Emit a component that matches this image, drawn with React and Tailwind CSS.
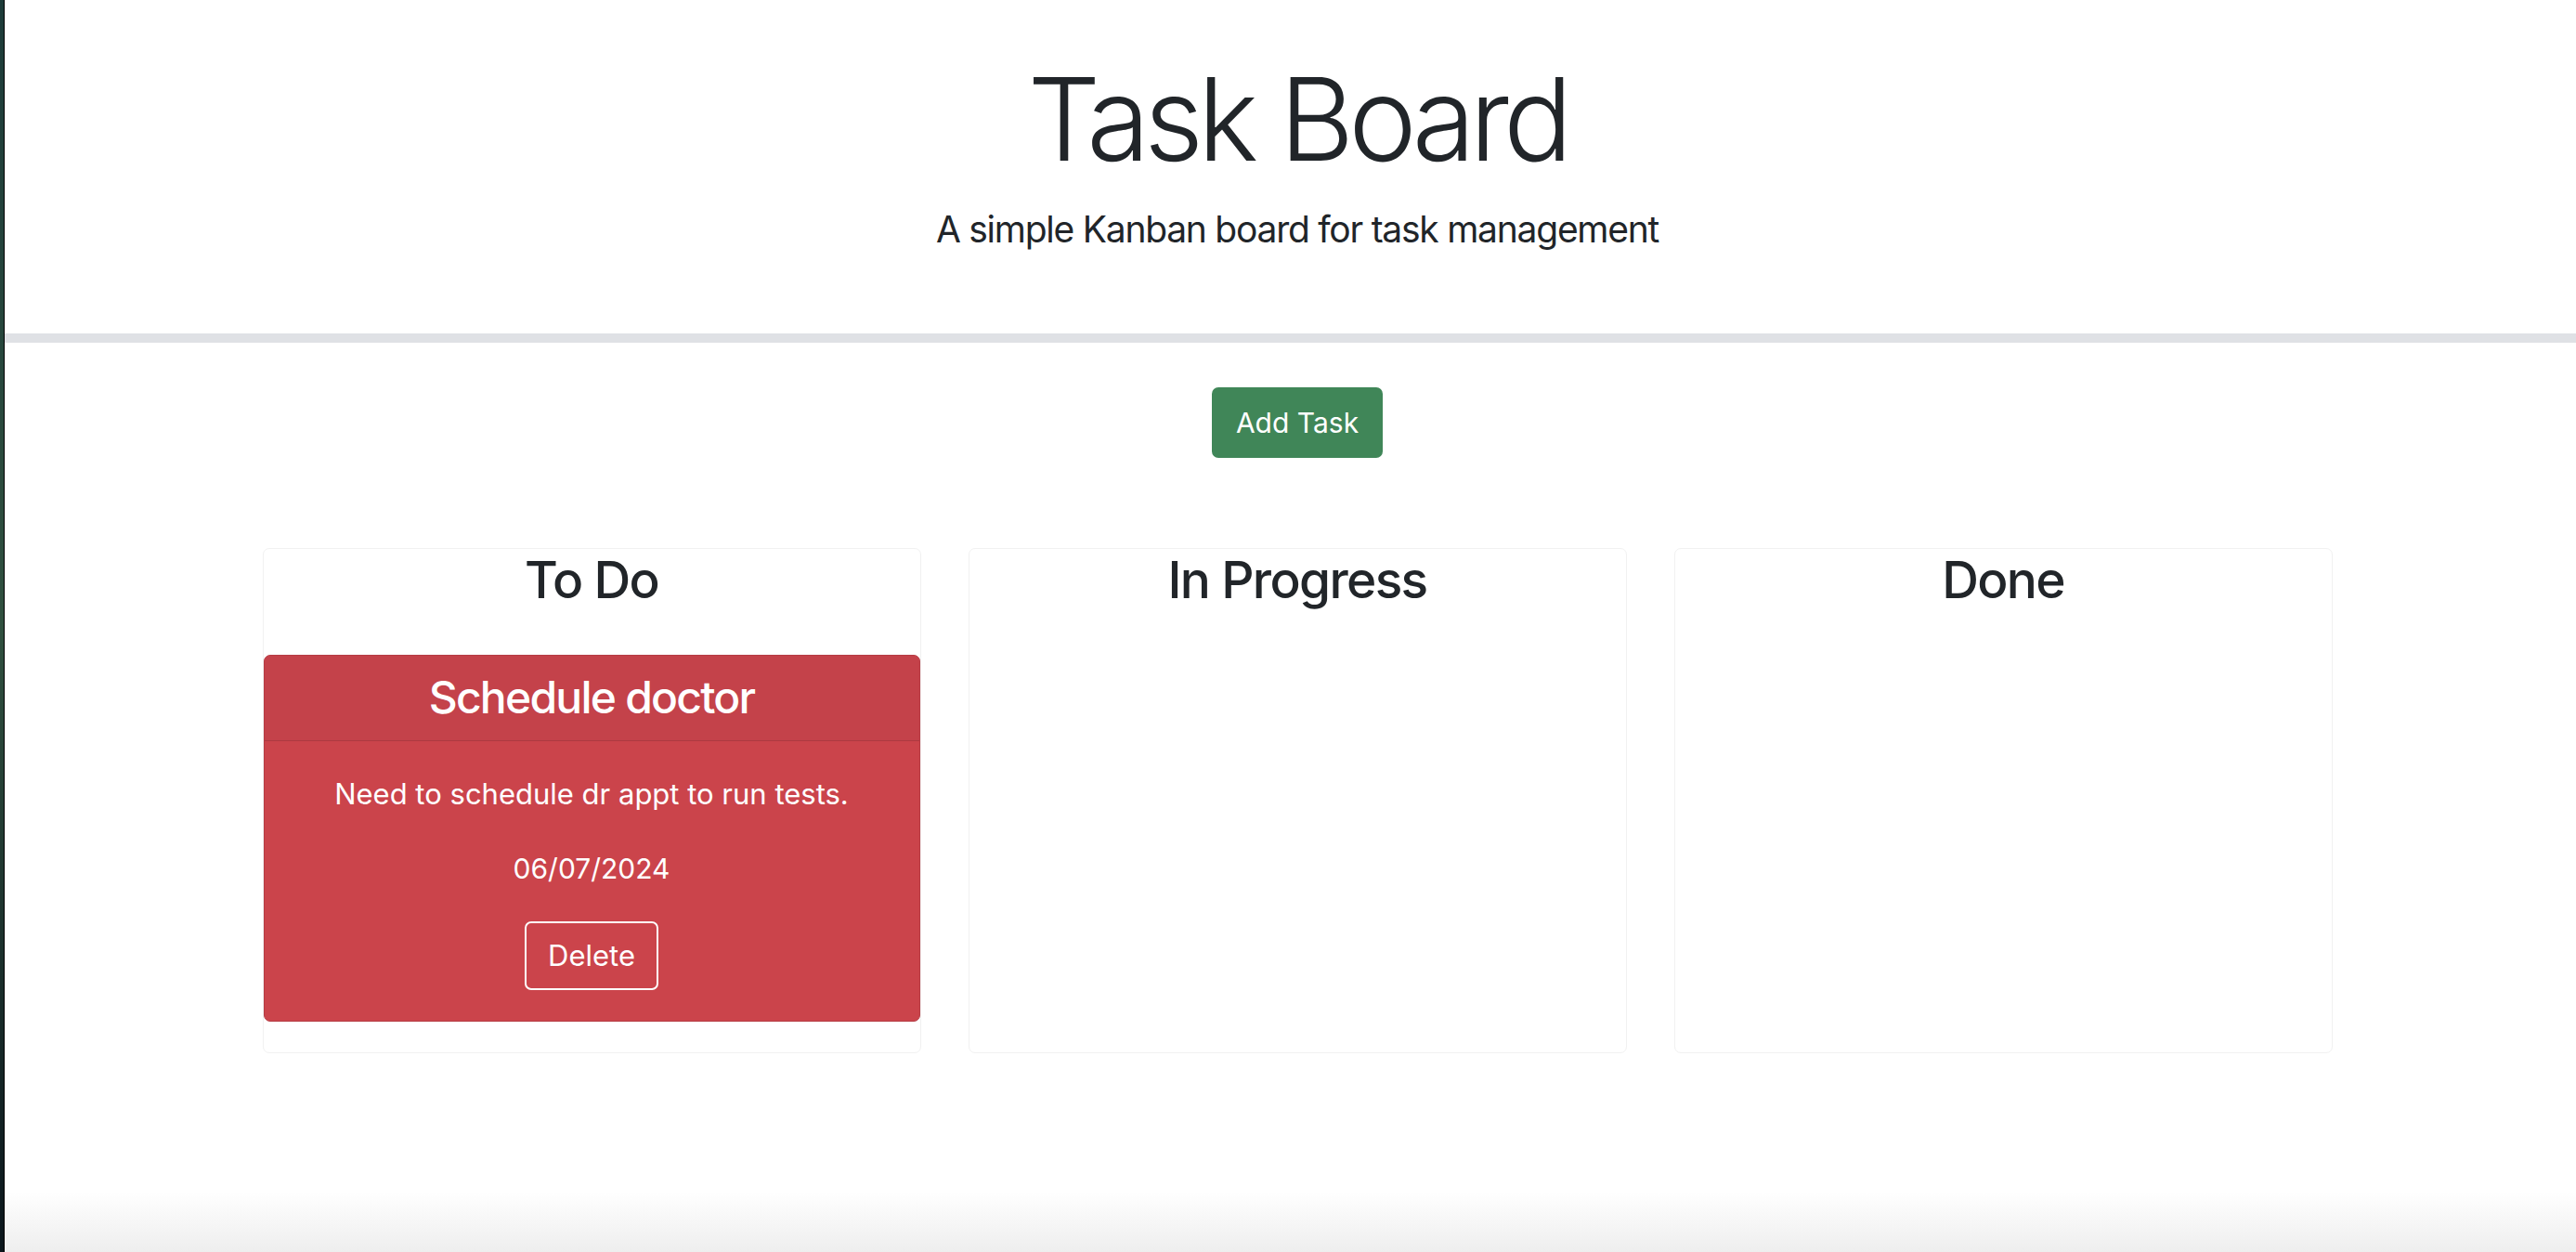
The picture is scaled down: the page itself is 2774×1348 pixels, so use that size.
export default function App() {
  return (
    <div className="flex h-[1348px] w-full overflow-hidden bg-white font-[Inter,sans-serif] text-[#212529]">
      <div className="w-[5px] shrink-0 border-r border-black bg-linear-to-b from-[#1d3b39] via-[#30503f] to-[#0b161c]" />
      <div className="flex w-[2784px] shrink-0 flex-col">
        <header className="pt-[54px] pb-[82px] text-center">
          <h1 className="text-[124px] font-light leading-[1.2] tracking-[-0.05em]">Task Board</h1>
          <p className="mt-[14px] text-[39px] leading-[1.55] tracking-[-0.032em]">
            A simple Kanban board for task management
          </p>
        </header>
        <div className="h-[10px] bg-[#dfe1e5]" />
        <div className="flex justify-center pt-[48px]">
          <button className="flex h-[76px] w-[184px] items-center justify-center rounded-[7px] bg-[#408658] text-[30px] leading-[1.5] text-white">
            Add Task
          </button>
        </div>
        <div className="mx-auto mt-[97px] grid w-[2229px] grid-cols-3 gap-[51px]">
          <section className="rounded-[7px] border border-[#f1f1f1] pb-[33px]">
            <h2 className="mb-[48px] text-center text-[55px] font-medium leading-[1.2] tracking-[-0.03em]">To Do</h2>
            <div className="overflow-hidden rounded-[7px] border border-[#b63c44] bg-[#cb444b] text-center text-white">
              <h3 className="border-b border-[#ad3a41] bg-[#c4424a] pt-[16px] pb-[17px] text-[48px] font-medium leading-[1.2] tracking-[-0.037em]">
                Schedule doctor
              </h3>
              <div className="flex flex-col items-center pt-[35px] pb-[33px]">
                <p className="text-[31px] leading-[1.45]">Need to schedule dr appt to run tests.</p>
                <p className="mt-[35px] text-[30px] leading-[1.5]">06/07/2024</p>
                <button className="mt-[34px] flex h-[74px] w-[144px] items-center justify-center rounded-[7px] border-2 border-white text-[31px] leading-[1.5] text-white">
                  Delete
                </button>
              </div>
            </div>
          </section>
          <section className="rounded-[7px] border border-[#f1f1f1] pb-[33px]">
            <h2 className="text-center text-[55px] font-medium leading-[1.2] tracking-[-0.03em]">In Progress</h2>
          </section>
          <section className="rounded-[7px] border border-[#f1f1f1] pb-[33px]">
            <h2 className="text-center text-[55px] font-medium leading-[1.2] tracking-[-0.03em]">Done</h2>
          </section>
        </div>
        <div className="flex-1" />
        <div className="h-[65px] bg-linear-to-b from-white to-[#eeeeee]" />
      </div>
    </div>
  );
}
